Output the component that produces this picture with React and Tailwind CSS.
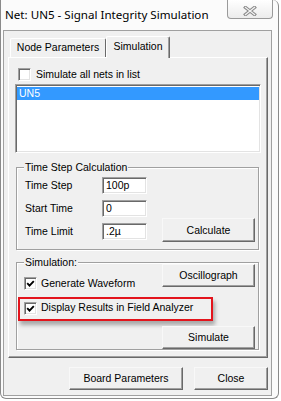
import React from 'react';

const sunken =
  'bg-white border border-t-[#a0a0a0] border-l-[#a0a0a0] border-r-white border-b-white shadow-[inset_1px_1px_0_#696969,inset_-1px_-1px_0_#e3e3e3]';

const CheckBox = ({ checked }) => (
  <div className={`w-[13px] h-[13px] shrink-0 flex items-center justify-center ${sunken}`}>
    {checked && (
      <svg width="9" height="9" viewBox="0 0 9 9">
        <path d="M1.2 4.2 L3.5 6.6 L7.8 2.1" fill="none" stroke="#000" strokeWidth="1.9" />
      </svg>
    )}
  </div>
);

const Btn = ({ children, className = '' }) => (
  <button
    className={`h-[23px] bg-[#f0f0f0] border border-t-[#f8f8f8] border-l-[#f8f8f8] border-r-[#696969] border-b-[#696969] shadow-[inset_-1px_-1px_0_#a0a0a0] text-[10.5px] leading-none text-black ${className}`}
  >
    {children}
  </button>
);

const Field = ({ value }) => (
  <div className={`w-[45px] h-[17px] pl-[3px] text-[10.5px] leading-[15px] ${sunken}`}>{value}</div>
);

const Group = ({ label, className = '', children }) => (
  <div
    className={`relative ml-[7px] w-[243px] border border-[#a0a0a0] shadow-[inset_1px_1px_0_#fff,1px_1px_0_#fff] ${className}`}
  >
    <span className="absolute left-[7px] top-[-7px] px-[1px] bg-[#f0f0f0] leading-[13px]">{label}</span>
    {children}
  </div>
);

const App = () => {
  const rows = [
    { label: 'Time Step', value: '100p' },
    { label: 'Start Time', value: '0' },
    { label: 'Time Limit', value: '.2µ' },
  ];

  return (
    <div className="w-[281px] h-[401px] bg-white overflow-hidden">
      {/* window frame */}
      <div className="w-[279px] h-[399px] flex flex-col bg-[#fbfbfb] border-l border-r border-b border-[#8a8a8a] rounded-b-[6px] rounded-tr-[6px]">
        {/* title bar */}
        <div className="h-[30px] flex items-start shrink-0">
          <span className="pl-[4px] pt-[7px] text-[11.6px] leading-[16px] text-black font-['Noto_Sans',sans-serif]">
            Net: UN5 - Signal Integrity Simulation
          </span>
          <div className="ml-auto mr-[5px] w-[46px] h-[19px] flex justify-center pt-[6px] border border-t-0 border-[#9a9a9a] rounded-b-[4px] bg-gradient-to-b from-white to-[#ececec]">
            <svg width="14" height="10" viewBox="0 0 14 10">
              <path d="M2.5 1.5 L11.5 8.5 M11.5 1.5 L2.5 8.5" stroke="#8a8a8a" strokeWidth="3.4" strokeLinecap="square" />
              <path d="M2.5 1.5 L11.5 8.5 M11.5 1.5 L2.5 8.5" stroke="#f2f2f2" strokeWidth="1.3" strokeLinecap="square" />
            </svg>
          </div>
        </div>

        {/* client area */}
        <div className="ml-[2px] w-[269px] h-[366px] bg-[#f0f0f0] border border-[#a0a0a0] text-[10.5px] text-black font-['Liberation_Sans',Arial,sans-serif]">
          {/* tabs */}
          <div className="mt-[5px] ml-[6px] h-[21px] flex items-end">
            <div className="w-[96px] h-[19px] flex items-center justify-center border border-b-0 border-t-white border-l-white border-r-[#696969] rounded-t-[2px]">
              Node Parameters
            </div>
            <div className="relative z-10 w-[64px] h-[22px] mb-[-1px] flex items-center justify-center bg-[#f0f0f0] border border-b-0 border-t-white border-l-white border-r-[#696969] shadow-[inset_-1px_0_0_#a0a0a0] rounded-t-[2px] pb-[1px]">
              Simulation
            </div>
          </div>

          {/* tab panel */}
          <div className="ml-[4px] w-[260px] h-[301px] border border-t-white border-l-white border-r-[#696969] border-b-[#696969] shadow-[inset_-1px_-1px_0_#a0a0a0]">
            <div className="mt-[10px] ml-[9px] flex items-center gap-[5px] h-[13px]">
              <CheckBox />
              <span>Simulate all nets in list</span>
            </div>

            <div className={`mt-[3px] ml-[6px] w-[246px] h-[69px] ${sunken}`}>
              <div className="mt-[2px] mx-[1px] h-[13px] bg-[#3399ff] text-white pl-[2px] leading-[13px]">UN5</div>
            </div>

            <Group label="Time Step Calculation" className="mt-[14px] h-[83px]">
              <div className="flex pt-[9px] pl-[8px]">
                <div className="flex flex-col gap-[6px]">
                  {rows.map((r) => (
                    <div key={r.label} className="flex items-center h-[17px]">
                      <span className="w-[77px]">{r.label}</span>
                      <Field value={r.value} />
                    </div>
                  ))}
                </div>
                <Btn className="self-end ml-[15px] mb-[-2px] w-[93px] h-[24px]">Calculate</Btn>
              </div>
            </Group>

            <Group label="Simulation:" className="mt-[12px] h-[88px]">
              <div className="flex flex-col">
                <div className="flex items-start mt-[1px]">
                  <div className="flex items-center gap-[4px] ml-[7px] mt-[12px]">
                    <CheckBox checked />
                    <span>Generate Waveform</span>
                  </div>
                  <Btn className="ml-auto mr-[3px] w-[93px]">Oscillograph</Btn>
                </div>
                <div className="mt-[5px] ml-[1px] w-[195px] h-[24px] flex items-center gap-[4px] pl-[4px] pb-[1px] border-2 border-[#e3141c] shadow-[2px_4px_4px_rgba(0,0,0,0.3)]">
                  <CheckBox checked />
                  <span>Display Results in Field Analyzer</span>
                </div>
                <div className="flex justify-end mt-[5px]">
                  <Btn className="mr-[3px] w-[93px] h-[22px]">Simulate</Btn>
                </div>
              </div>
            </Group>
          </div>

          {/* bottom buttons */}
          <div className="ml-[4px] w-[260px] mt-[9px] flex justify-end gap-[11px]">
            <Btn className="w-[114px] h-[22px]">Board Parameters</Btn>
            <Btn className="w-[74px] h-[22px]">Close</Btn>
          </div>
        </div>
      </div>
    </div>
  );
};

export default App;
